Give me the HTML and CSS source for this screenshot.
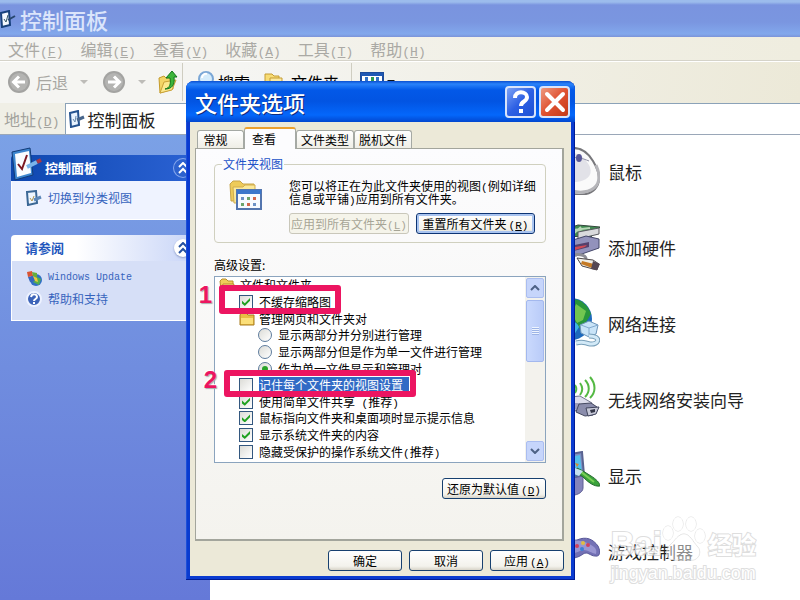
FILE: index.html
```
<!DOCTYPE html>
<html lang="zh-CN">
<head>
    <meta charset="UTF-8">
    <meta name="viewport" content="width=device-width, initial-scale=1.0">
    <title>控制面板</title>
    <link rel="stylesheet" href="styles.css">
</head>
<body>
    <div class="window">
        <header class="titlebar">
            <svg class="title-icon" viewBox="0 0 16 18"><path d="M1 3l8-2 1 14-8 2z" fill="#f4f8ff" stroke="#17407c" stroke-width="2"/><path d="M4 9l2 3 2-7" fill="none" stroke="#356" /><path d="M8 10l7-4" stroke="#27466e" stroke-width="2"/></svg>
            <h1>控制面板</h1>
        </header>

        <nav class="menubar">
            <a href="#">文件<span class="key">(<u>F</u>)</span></a>
            <a href="#">编辑<span class="key">(<u>E</u>)</span></a>
            <a href="#">查看<span class="key">(<u>V</u>)</span></a>
            <a href="#">收藏<span class="key">(<u>A</u>)</span></a>
            <a href="#">工具<span class="key">(<u>T</u>)</span></a>
            <a href="#">帮助<span class="key">(<u>H</u>)</span></a>
        </nav>

        <div class="toolbar">
            <button class="tool disabled" type="button">
                <svg width="24" height="24" viewBox="0 0 24 24"><circle cx="12" cy="12" r="11" fill="#a3a3a1"/><circle cx="12" cy="12" r="9" fill="#b4b4b2"/><path d="M18 12H7M12 6.500l-5.500 5.500 5.500 5.500" fill="none" stroke="#fff" stroke-width="3"/></svg>
                后退
            </button>
            <span class="arrow faded"></span>
            <button class="tool disabled forward" type="button" aria-label="前进">
                <svg width="24" height="24" viewBox="0 0 24 24"><circle cx="12" cy="12" r="11" fill="#a3a3a1"/><circle cx="12" cy="12" r="9" fill="#b4b4b2"/><path d="M6 12h11M12 6.500l5.500 5.500-5.500 5.500" fill="none" stroke="#fff" stroke-width="3"/></svg>
            </button>
            <span class="arrow faded"></span>
            <button class="tool up" type="button" aria-label="向上">
                <svg width="20" height="24" viewBox="0 0 20 24"><path d="M1 8l5-2 2 2 7-1v12L2 23z" fill="#f3d565" stroke="#c49a2a"/><path d="M2 23l4-11 12-2-4 10z" fill="#fbe88c" stroke="#c9a136"/><path d="M7 19c5-1 6-5 5-11H8l6-7 5 6h-3c1 8-2 12-9 12z" fill="#3db53a" stroke="#13761c"/></svg>
            </button>
            <span class="separator"></span>
            <button class="tool search" type="button">
                <svg width="19" height="24" viewBox="0 0 19 24"><circle cx="9" cy="9" r="7" fill="#d5ecfb" stroke="#7ba7d6" stroke-width="2"/><path d="M5 8a4 4 0 0 1 5-4" fill="none" stroke="#fff" stroke-width="2"/><path d="M13 15l4 6" stroke="#a98438" stroke-width="3"/></svg>
                搜索
            </button>
            <button class="tool folders" type="button">
                <svg width="20" height="20" viewBox="0 0 20 20"><path d="M1 2h7l2 2h5v10H1z" fill="#f7dc74" stroke="#c59c33"/><path d="M6 6h12v12H6z" fill="#fbeaa0" stroke="#c59c33"/></svg>
                文件夹
            </button>
            <span class="separator"></span>
            <button class="tool views" type="button" aria-label="查看方式">
                <svg width="24" height="20" viewBox="0 0 24 20"><path d="M1 1h22v18H1z" fill="#fff" stroke="#1d4c9c" stroke-width="2"/><path d="M1 1h22v3H1z" fill="#1f58b4"/><path d="M5 5h3v4H5zM16 5h3v4h-3z" fill="#3171c4"/><path d="M11 5h3v4h-3z" fill="#2e9a50"/></svg>
                <span class="arrow"></span>
            </button>
        </div>

        <div class="addressbar">
            <label for="address">地址<span class="key">(<u>D</u>)</span></label>
            <div class="address-field">
                <svg width="16" height="18" viewBox="0 0 16 18"><path d="M1 3l8-2 1 14-8 2z" fill="#e8f3ff" stroke="#24528f" stroke-width="2"/><path d="M4 9l2 3 1-6" fill="none" stroke="#68a"/><path d="M8 10l7-3" stroke="#47658b" stroke-width="3"/></svg>
                <input id="address" type="text" value="控制面板">
            </div>
        </div>

        <div class="content">
            <aside class="sidebar">
                <section class="pane primary">
                    <div class="pane-head">
                        <svg class="pane-icon" width="32" height="34" viewBox="0 0 32 34"><path d="M1 5l18-4 3 27-18 5z" fill="#3d86cf" stroke="#123b78"/><path d="M4 7l14-3 2 22-14 4z" fill="#fafcff"/><path d="M7 17l4 5 5-14" fill="none" stroke="#7c1a24" stroke-width="2"/><path d="M16 20l10-5" stroke="#7ab4ea" stroke-width="4"/><path d="M26 15l4-2" stroke="#a83848" stroke-width="4"/></svg>
                        <h2>控制面板</h2>
                        <button class="collapse" type="button" aria-label="收起"><svg width="10" height="12" viewBox="0 0 10 12"><path d="M1 5l4-4 4 4M1 11l4-4 4 4" fill="none" stroke="currentColor" stroke-width="2"/></svg></button>
                    </div>
                    <ul>
                        <li>
                            <svg width="16" height="16" viewBox="0 0 16 16"><path d="M1 2l9-1 1 12-9 2z" fill="#eef6ff" stroke="#3a6795" stroke-width="2"/><path d="M4 8l2 3 2-5" fill="none" stroke="#b3974c"/><path d="M8 10l7-3" stroke="#5c87b8" stroke-width="3"/></svg>
                            <a href="#">切换到分类视图</a>
                        </li>
                    </ul>
                </section>
                <section class="pane">
                    <div class="pane-head">
                        <h2>请参阅</h2>
                        <button class="collapse" type="button" aria-label="收起"><svg width="10" height="12" viewBox="0 0 10 12"><path d="M1 5l4-4 4 4M1 11l4-4 4 4" fill="none" stroke="currentColor" stroke-width="2"/></svg></button>
                    </div>
                    <ul>
                        <li>
                            <svg width="16" height="16" viewBox="0 0 16 16"><circle cx="10" cy="10" r="6" fill="#2f6fc6"/><path d="M7 12l4-5 4 2-2 6z" fill="#55ae4c"/><path d="M1 2l5-1 1 5-5 1z" fill="#da5433"/><path d="M6 2l5 1v5l-4-2z" fill="#64ae3d"/><path d="M2 7l5-1 2 5-5 1z" fill="#3566bd"/><path d="M7 6l4 2 1 4-3-1z" fill="#efc83c"/></svg>
                            <a href="#" class="latin">Windows Update</a>
                        </li>
                        <li>
                            <svg width="16" height="16" viewBox="0 0 16 16"><circle cx="8" cy="8" r="7" fill="#3c63b8" stroke="#edf2ff" stroke-width="2"/><path d="M5 6c1-4 6-3 6 0 0 2-3 2-3 4M8 11v2" fill="none" stroke="#fff" stroke-width="2"/></svg>
                            <a href="#">帮助和支持</a>
                        </li>
                    </ul>
                </section>
            </aside>

            <main class="items">
                <a class="item" href="#">
                    <svg width="48" height="48" viewBox="0 0 48 48"><path d="M8 4C24-3 34 2 41 14c6 10 9 20 2 28-7 8-24 7-35 0z" fill="#fafafa" stroke="#77777b" stroke-width="2"/><path d="M10 8c15-6 23 2 28 12 3 9-4 14-14 15H10z" fill="#e2e2e8"/><path d="M12 12c11-3 18-1 25 2" fill="none" stroke="#9394a8"/><ellipse cx="27" cy="11" rx="3" ry="4" fill="#585797"/><path d="M44 18c4 9 5 17-2 23-7 5-14 5-22 3" fill="none" stroke="#b5b5b9" stroke-width="3"/></svg>
                    鼠标
                </a>
                <a class="item" href="#">
                    <svg width="48" height="48" viewBox="0 0 48 48"><path d="M8 8l18-6 22 2-9 10-31-1z" fill="#3f8a50" stroke="#34463c"/><path d="M12 8l26-3M16 5l24 6M29 4l-9 8" stroke="#b7d8b6" stroke-width="2"/><path d="M26 9l21-4v6l-21 5z" fill="#d9dadd" stroke="#58595f"/><path d="M8 21l26-8 13 3v9l-23 8-16-3z" fill="#9292bc" stroke="#45486a"/><path d="M13 24l24-5v5l-23 6z" fill="#54406c"/><path d="M23 24l12-2-2 2-13 4z" fill="#cf4a56"/><path d="M12 34c13-4 23-3 22 3" fill="none" stroke="#8d8d95" stroke-width="3"/><path d="M25 35l16 2 6 4-2 6-15-4z" fill="#efefe9" stroke="#4d4749"/><path d="M30 38l12 3-2 4-11-4z" fill="#c47a25"/><path d="M41 38l7 3-3 6-6-1z" fill="#554753"/></svg>
                    添加硬件
                </a>
                <a class="item" href="#">
                    <svg width="48" height="50" viewBox="0 0 48 50"><circle cx="19" cy="21" r="21" fill="#1d69bd"/><path d="M20 1c9 0 16 6 19 15l-6 10-5 5-9-14z" fill="#28963b"/><path d="M24 6l10 7-3 9-6 3-5-9z" fill="#72c650"/><path d="M12 24c8-2 13 0 15 5l-7 11-9-2z" fill="#3eb4e4"/><path d="M28 27l9-4 9 4-2 9-7 3-8-4z" fill="#c9e4f8" stroke="#6c94b8"/><path d="M37 30l9-3M37 30l-8-3M37 30v8" fill="none" stroke="#83aace"/><path d="M37 38c13 0 10 9 1 8-6-1-6-3-14-1" fill="none" stroke="#779eb8" stroke-width="5"/><path d="M37 38c13 0 10 9 1 8-6-1-6-3-14-1" fill="none" stroke="#d2e9f7" stroke-width="3"/></svg>
                    网络连接
                </a>
                <a class="item" href="#">
                    <svg width="48" height="48" viewBox="0 0 48 48"><path d="M23 10c2 3 2 5 0 8M28 8c3 4 3 8 0 12M33 5c5 5 5 12 0 17M38 2c6 7 6 15 0 21" fill="none" stroke="#54b943" stroke-width="2"/><path d="M8 23l20-2 12 7-5 8-27-1z" fill="#ddddec" stroke="#74768f"/><path d="M8 28h19l8 7-27-1z" fill="#9c9dbd"/><path d="M27 29l12-1 6 4-4 8-8 1-9-4z" fill="#8b8dac" stroke="#454960"/><path d="M34 33l13-1-3 7-8 2z" fill="#c6c8d7" stroke="#3f435b"/><path d="M38 35l5-1v3l-4 1z" fill="#343849"/></svg>
                    无线网络安装向导
                </a>
                <a class="item" href="#">
                    <svg width="48" height="48" viewBox="0 0 48 48"><path d="M8 5l22-4 2 23-22 6z" fill="#8190c3" stroke="#596391" stroke-width="2"/><path d="M9 8l19-4 2 18-20 5z" fill="#55c0ea"/><path d="M9 23l8-13 13 14-20 5z" fill="#4b789f"/><path d="M23 12l4 1-2 3z" fill="#d48a36"/><path d="M16 28l15-3v12c0 5-8 8-12 7l-9-5z" fill="#8584bb" stroke="#606094"/><path d="M25 17l6 3 8 5c5 3 9 7 9 10-6 1-12-4-17-9l-7-5z" fill="#3ba23b" stroke="#256b2f"/><path d="M28 20l14 11" stroke="#79cf55" stroke-width="2"/><path d="M23 17l8 3-4 5-5-2z" fill="#c4dff0"/></svg>
                    显示
                </a>
                <a class="item" href="#">
                    <svg width="48" height="48" viewBox="0 0 48 48"><path d="M4 16c7-5 15-2 21-3 9-4 16-1 21 6 3 6 2 11-3 10-5 0-7-5-12-2-5 4-12 5-16 4-6-2-11-8-11-15z" fill="#7371b5" stroke="#575698"/><path d="M5 15c14-2 26-3 34 3 5 3 6 5 5 9-6-1-10-6-16-3-9 4-15 4-23-9z" fill="#9996d2"/><circle cx="25" cy="19" r="2" fill="#cf4160"/><circle cx="31" cy="16" r="2" fill="#e0bd43"/><circle cx="36" cy="18" r="2" fill="#cf4160"/><circle cx="30" cy="22" r="2" fill="#3a80d6"/></svg>
                    游戏控制器
                </a>

                <div class="watermark">
                    <div class="wm-top">
                        <span>Bai</span>
                        <svg width="44" height="46" viewBox="0 0 44 46"><g fill="#fff" stroke="#d4d4d4"><ellipse cx="6" cy="17" rx="5" ry="7"/><ellipse cx="16" cy="8" rx="5" ry="7"/><ellipse cx="29" cy="8" rx="5" ry="7"/><ellipse cx="38" cy="20" rx="5" ry="7"/><path d="M22 18c6 0 9 8 13 12 6 6 1 15-6 14H12C4 44 2 35 8 29c5-4 8-11 14-11z" fill-opacity=".6"/></g></svg>
                        <span class="wm-cn">经验</span>
                    </div>
                    <div class="wm-url">jingyan.baidu.com</div>
                </div>
            </main>
        </div>
    </div>

    <!-- folder options dialog -->
    <div class="dialog" role="dialog" aria-labelledby="dialog-title">
        <div class="dialog-title">
            <h2 id="dialog-title">文件夹选项</h2>
            <button class="caption help" type="button" aria-label="帮助"><svg width="20" height="24" viewBox="0 0 20 24"><path d="M4 8c0-8 12-7 12-1 0 5-6 4-6 9M10 19v4" fill="none" stroke="#fff" stroke-width="4"/></svg></button>
            <button class="caption close" type="button" aria-label="关闭"><svg width="22" height="22" viewBox="0 0 22 22"><path d="M3 3l16 16M19 3L3 19" stroke="#fff" stroke-width="4" stroke-linecap="round"/></svg></button>
        </div>

        <div class="dialog-body">
            <div class="tabs" role="tablist">
                <button class="tab short" type="button" role="tab">常规</button>
                <button class="tab short active" type="button" role="tab" aria-selected="true">查看</button>
                <button class="tab" type="button" role="tab">文件类型</button>
                <button class="tab" type="button" role="tab">脱机文件</button>
            </div>

            <div class="panel">
                <fieldset class="views-group">
                    <legend>文件夹视图</legend>
                    <svg width="34" height="32" viewBox="0 0 34 32"><path d="M1 4l3-3h7l3 3h11v17H2z" fill="#eecb59" stroke="#c7a448"/><path d="M4 7h10l2-2h10v18H5z" fill="#fbe99a" stroke="#d1ad4e"/><path d="M8 10h24v19H8z" fill="#f7faff" stroke="#5375ae" stroke-width="2"/><path d="M8 10h24v4H8z" fill="#3c76cb"/><path d="M12 17h3v3h-3zM24 23h3v3h-3z" fill="#6c91c5"/><path d="M18 17h3v3h-3zM12 23h3v3h-3z" fill="#6ca46c"/><path d="M24 17h3v3h-3zM18 23h3v3h-3z" fill="#d3664c"/></svg>
                    <div class="views-text">
                        <p>您可以将正在为此文件夹使用的视图<span class="key">(</span>例如详细信息或平铺<span class="key">)</span>应用到所有文件夹。</p>
                        <div class="views-buttons">
                            <button class="btn" type="button" disabled>应用到所有文件夹<span class="key">(<u>L</u>)</span></button>
                            <button class="btn default" type="button">重置所有文件夹<span class="key">(<u>R</u>)</span></button>
                        </div>
                    </div>
                </fieldset>

                <p class="list-label">高级设置:</p>
                <div class="list-wrap">
                    <div class="list">
                        <div class="rows">
                            <div class="row">
                                <svg width="16" height="14" viewBox="0 0 16 14"><path d="M1 3l2-2h4l2 2h5v9H2z" fill="#f0cb5a" stroke="#b88c2b"/><path d="M2 12l2-6h11l-2 6z" fill="#fbe58c" stroke="#b88c2b"/></svg>
                                文件和文件夹
                            </div>
                            <label class="row level-1"><input type="checkbox" checked>不缓存缩略图</label>
                            <div class="row level-1">
                                <svg width="16" height="14" viewBox="0 0 16 14"><path d="M1 3l1-2h5l2 2h6v10H1z" fill="#e9bd44" stroke="#a87d20"/><path d="M2 6h12v6H2z" fill="#fbdf79"/></svg>
                                管理网页和文件夹对
                            </div>
                            <label class="row level-2"><input type="radio" name="pair">显示两部分并分别进行管理</label>
                            <label class="row level-2"><input type="radio" name="pair">显示两部分但是作为单一文件进行管理</label>
                            <label class="row level-2"><input type="radio" name="pair" checked>作为单一文件显示和管理对</label>
                            <label class="row level-1"><input type="checkbox"><span class="selected">记住每个文件夹的视图设置</span></label>
                            <label class="row level-1"><input type="checkbox" checked><span>使用简单文件共享<span class="key"> (</span>推荐<span class="key">)</span></span></label>
                            <label class="row level-1"><input type="checkbox" checked>鼠标指向文件夹和桌面项时显示提示信息</label>
                            <label class="row level-1"><input type="checkbox" checked>显示系统文件夹的内容</label>
                            <label class="row level-1"><input type="checkbox"><span>隐藏受保护的操作系统文件<span class="key">(</span>推荐<span class="key">)</span></span></label>
                        </div>
                        <div class="scrollbar">
                            <button type="button" aria-label="向上滚动"><svg width="10" height="6" viewBox="0 0 10 6"><path d="M1 5l4-4 4 4" fill="none" stroke="#4d6185" stroke-width="2"/></svg></button>
                            <div class="thumb"></div>
                            <button type="button" aria-label="向下滚动"><svg width="10" height="6" viewBox="0 0 10 6"><path d="M1 1l4 4 4-4" fill="none" stroke="#4d6185" stroke-width="2"/></svg></button>
                        </div>
                    </div>
                    <div class="mark mark-1"><b>1</b></div>
                    <div class="mark mark-2"><b>2</b></div>
                </div>
                <button class="btn restore" type="button">还原为默认值<span class="key">(<u>D</u>)</span></button>
            </div>

            <div class="actions">
                <button class="btn" type="button">确定</button>
                <button class="btn" type="button">取消</button>
                <button class="btn" type="button">应用<span class="key">(<u>A</u>)</span></button>
            </div>
        </div>
    </div>
</body>
</html>
```

FILE: styles.css
```
* { box-sizing: border-box; }
body { margin: 0; font-family: "Noto Sans CJK SC", sans-serif; font-size: 12px; color: #000; overflow: hidden; }
h1, h2, p, ul { margin: 0; padding: 0; }
ul { list-style: none; }
a { text-decoration: none; color: inherit; }
button, input { font-family: inherit; font-size: inherit; color: inherit; margin: 0; }
button { padding: 0; border: none; background: none; }
svg { display: block; flex: none; }
.key { font-family: "Liberation Mono", monospace; font-size: 11px; line-height: 0; white-space: pre; }

/* main window */
.window { display: flex; flex-direction: column; height: 100vh; background: #f0efe6; }
.titlebar { display: flex; align-items: center; gap: 4px; height: 37px; flex: none; background: linear-gradient(#9cbcec 0, #9cbcec 2px, #7a94df 5px, #7a96e0 22px, #82a8ec 34px, #7b93d8 37px); }
.title-icon { width: 16px; height: 18px; }
.titlebar h1 { font-size: 22px; line-height: 34px; font-weight: 500; color: #dbe5fb; }
.menubar { display: flex; gap: 17px; height: 24px; flex: none; padding-left: 8px; align-items: center; color: #aaa9a4; font-size: 16px; line-height: 22px; border-bottom: 1px solid #d5d3c9; background: linear-gradient(90deg, #f5f5f3, #efeddf); }
.menubar .key, .addressbar .key { font-size: 13px; }
.toolbar { display: flex; align-items: center; height: 42px; flex: none; padding: 0 0 2px 7px; border-top: 1px solid #fff; background: linear-gradient(100deg, #f5f5f2 30%, #ece9d8); font-size: 16px; }
.tool { display: flex; align-items: center; gap: 5px; line-height: 24px; }
.disabled { color: #a8a7a2; }
.arrow { border: 4px solid transparent; border-top-color: #111; border-bottom: 0; margin: 0 12px; }
.arrow.faded { border-top-color: #bdbcb8; }
.forward { margin-left: 2px; }
.up { margin-right: 4px; }
.separator { width: 1px; height: 38px; background: #cfcdc1; }
.search { margin-left: 14px; gap: 2px; }
.folders { margin: 0 12px 0 14px; gap: 7px; }
.views { margin-left: 8px; gap: 3px; }
.views .arrow { margin: 0; }
.addressbar { display: flex; align-items: center; height: 32px; flex: none; padding-left: 4px; gap: 6px; color: #a3a29c; font-size: 16px; border-bottom: 1px solid #9aa7b8; }
.address-field { display: flex; flex: 1; align-items: center; gap: 2px; height: 31px; padding-left: 3px; background: #fff; border: 1px solid #8ba2b8; border-right: 0; border-bottom: 0; }
.address-field input { flex: 1; border: 0; padding: 0; outline: 0; font-size: 17px; color: #222; }
.content { display: flex; flex: 1; min-height: 0; }

/* task panes */
.sidebar { width: 210px; flex: none; padding: 20px 12px 0 11px; background: linear-gradient(#7ba1e6, #6579d8); }
.pane { margin-bottom: 15px; }
.pane-head { display: flex; align-items: center; height: 26px; padding: 0 6px 0 14px; border-radius: 4px 4px 0 0; background: linear-gradient(90deg, #fff 35%, #c6d3f7); color: #2357bd; }
.pane-head h2 { flex: 1; font-size: 13px; line-height: 24px; }
.pane ul { display: flex; flex-direction: column; gap: 4px; padding: 8px 14px 13px; background: #d6dff7; border: 1px solid #fff; border-top: 0; }
.pane li { display: flex; align-items: center; gap: 6px; height: 17px; line-height: 16px; color: #3664bd; }
.primary .pane-head { gap: 2px; padding-left: 0; background: linear-gradient(90deg, #0e47af, #2b62d4); color: #fff; }
.pane-icon { align-self: flex-end; }
.primary ul { background: #eff3ff; }
.latin { font-family: "Liberation Mono", monospace; font-size: 10px; }
.collapse { display: flex; align-items: center; justify-content: center; width: 18px; height: 18px; border-radius: 50%; background: #fff; color: #24509f; box-shadow: 0 1px 2px #8b9bc8; }
.primary .collapse { background: #2d62ce; color: #fff; box-shadow: 0 0 0 1px #86a7ec; }

/* control panel items */
.items { position: relative; flex: 1; display: flex; flex-direction: column; gap: 28px; padding: 12px 0 0 342px; background: #fff; }
.item { display: flex; align-items: center; gap: 8px; height: 48px; font-size: 17px; color: #222; white-space: nowrap; }
.watermark { position: absolute; right: 44px; bottom: 16px; color: #fff; font-family: "Liberation Sans", "Noto Sans CJK SC", sans-serif; font-weight: bold; opacity: .8; -webkit-text-stroke: 2px #d6d6d6; paint-order: stroke fill; }
.wm-top { display: flex; align-items: flex-end; font-size: 33px; line-height: 36px; }
.wm-cn { font-size: 24px; line-height: 32px; margin-left: 2px; }
.wm-url { font-size: 18px; line-height: 22px; font-weight: normal; }

/* dialog */
.dialog { position: absolute; left: 186px; top: 81px; width: 389px; padding: 0 4px 4px; border-radius: 8px 8px 0 0; background: #0a3bd0; box-shadow: inset -1px -1px #001c96, inset 1px 0 #1c4fd8; }
.dialog-title { display: flex; align-items: center; gap: 3px; height: 41px; margin: 0 -4px; padding: 0 5px 0 9px; border-radius: 8px 8px 0 0; background: linear-gradient(#0b4fd0, #2a83fa 3px, #0359e8 9px, #0254e2 20px, #0467fb 34px, #0247cf); }
.dialog-title h2 { flex: 1; font-size: 22px; line-height: 38px; font-weight: 500; color: #fff; text-shadow: 1px 1px #0b2b80; }
.caption { display: flex; align-items: center; justify-content: center; width: 31px; height: 32px; border: 2px solid #d8e4fb; border-radius: 4px; }
.help { background: linear-gradient(135deg, #7da2f5, #2d60e4 50%, #1c50d4); }
.close { background: linear-gradient(135deg, #ee9a80, #df5232 50%, #c53a18); }
.dialog-body { padding: 6px 7px 5px 5px; background: #ece9d8; }
.tabs { display: flex; align-items: flex-end; height: 20px; padding-left: 2px; }
.tab { width: 58px; height: 18px; line-height: 17px; border: 1px solid #a5a9a4; border-bottom: 0; border-radius: 3px 3px 0 0; background: linear-gradient(#fff, #efeee6); }
.tab.short { width: 47px; padding-right: 10px; }
.tab.active { width: 52px; height: 22px; margin-bottom: -1px; padding-right: 12px; line-height: 18px; border-top: 2px solid #eca02d; background: #fcfcfe; z-index: 1; }
.panel { padding: 7px 16px 40px 18px; border: 1px solid #a3a59c; border-right-width: 2px; border-bottom-width: 2px; background: linear-gradient(#fcfcfe, #f4f3ee); }
.views-group { display: flex; gap: 26px; height: 87px; margin: 0; padding: 8px 0 0 14px; border: 1px solid #d0d0bf; border-radius: 4px; }
.views-group legend { margin-left: -7px; padding: 0 1px; line-height: 16px; color: #2353c8; }
.views-text { width: 250px; }
.views-text p { line-height: 13px; margin-top: -1px; }
.views-buttons { display: flex; gap: 7px; margin-top: 8px; }
.btn { min-width: 74px; height: 21px; line-height: 17px; white-space: nowrap; border: 1px solid #17406f; border-radius: 3px; background: linear-gradient(#fff, #f3f2ec 80%, #d8d4c8); }
.btn .key { margin-left: 2px; }
.btn:disabled { width: 120px; color: #a7a596; border-color: #c9c7ba; background: #f5f4ea; }
.btn:disabled .key { margin-left: 0; }
.btn.default { width: 119px; box-shadow: inset 0 0 0 2px #a9c4f0; border-color: #0d3474; }
.list-label { margin-top: 14px; line-height: 16px; }
.list-wrap { position: relative; margin-top: 3px; }
.list { display: flex; height: 187px; border: 1px solid #8ba4be; background: #fff; overflow: hidden; }
.rows { flex: 1; display: flex; flex-direction: column; padding-bottom: 2px; }
.row { flex: 1; display: flex; align-items: center; gap: 5px; min-height: 0; padding-left: 4px; line-height: 16px; white-space: nowrap; }
.level-1 { padding-left: 24px; }
.level-1 svg { margin-right: -1px; }
.level-2 { padding-left: 43px; }
.row input { appearance: none; display: flex; align-items: center; justify-content: center; flex: none; width: 14px; height: 14px; margin-right: 1px; border: 1px solid #33577f; background: linear-gradient(135deg, #dcdcd7, #fff); }
.row input[type="radio"] { border-radius: 50%; border-color: #5e7c9d; }
.row input[type="checkbox"]:checked::after { content: ""; width: 8px; height: 8px; background: #21a121; clip-path: polygon(0 35%, 35% 65%, 100% 0, 100% 35%, 35% 100%, 0 70%); }
.row input[type="radio"]:checked::after { content: ""; width: 6px; height: 6px; border-radius: 50%; background: #2aa32a; }
.selected { background: #316ac5; color: #fff; padding-right: 6px; }
.scrollbar { display: flex; flex-direction: column; gap: 2px; width: 20px; padding: 1px; background: #f3f2ed; }
.scrollbar button { display: flex; align-items: center; justify-content: center; height: 20px; border: 1px solid #aabdf0; border-radius: 2px; background: #c6d5fb; }
.thumb { height: 62px; margin-bottom: auto; border: 1px solid #a3b8ee; border-radius: 2px; background: repeating-linear-gradient(#eef4fe 0 1px, #9db4e6 1px 2px) center / 7px 8px no-repeat, linear-gradient(90deg, #cad9fd, #b9cbf8); }

/* numbered callouts over the list */
.mark { position: absolute; border: 6px solid #ec1561; border-radius: 3px; }
.mark b { position: absolute; right: 100%; top: -10px; margin-right: 13px; font: bold 24px/28px "Liberation Sans", sans-serif; color: #ec1561; text-shadow: 1px 1px 1px #aaa, -1px -1px #fff; }
.mark-1 { left: 5px; top: 9px; width: 122px; height: 29px; }
.mark-2 { left: 10px; top: 94px; width: 192px; height: 27px; }
.restore { display: block; width: 104px; margin: 15px 0 0 auto; }
.actions { display: flex; justify-content: flex-end; gap: 7px; padding-top: 9px; }
```
